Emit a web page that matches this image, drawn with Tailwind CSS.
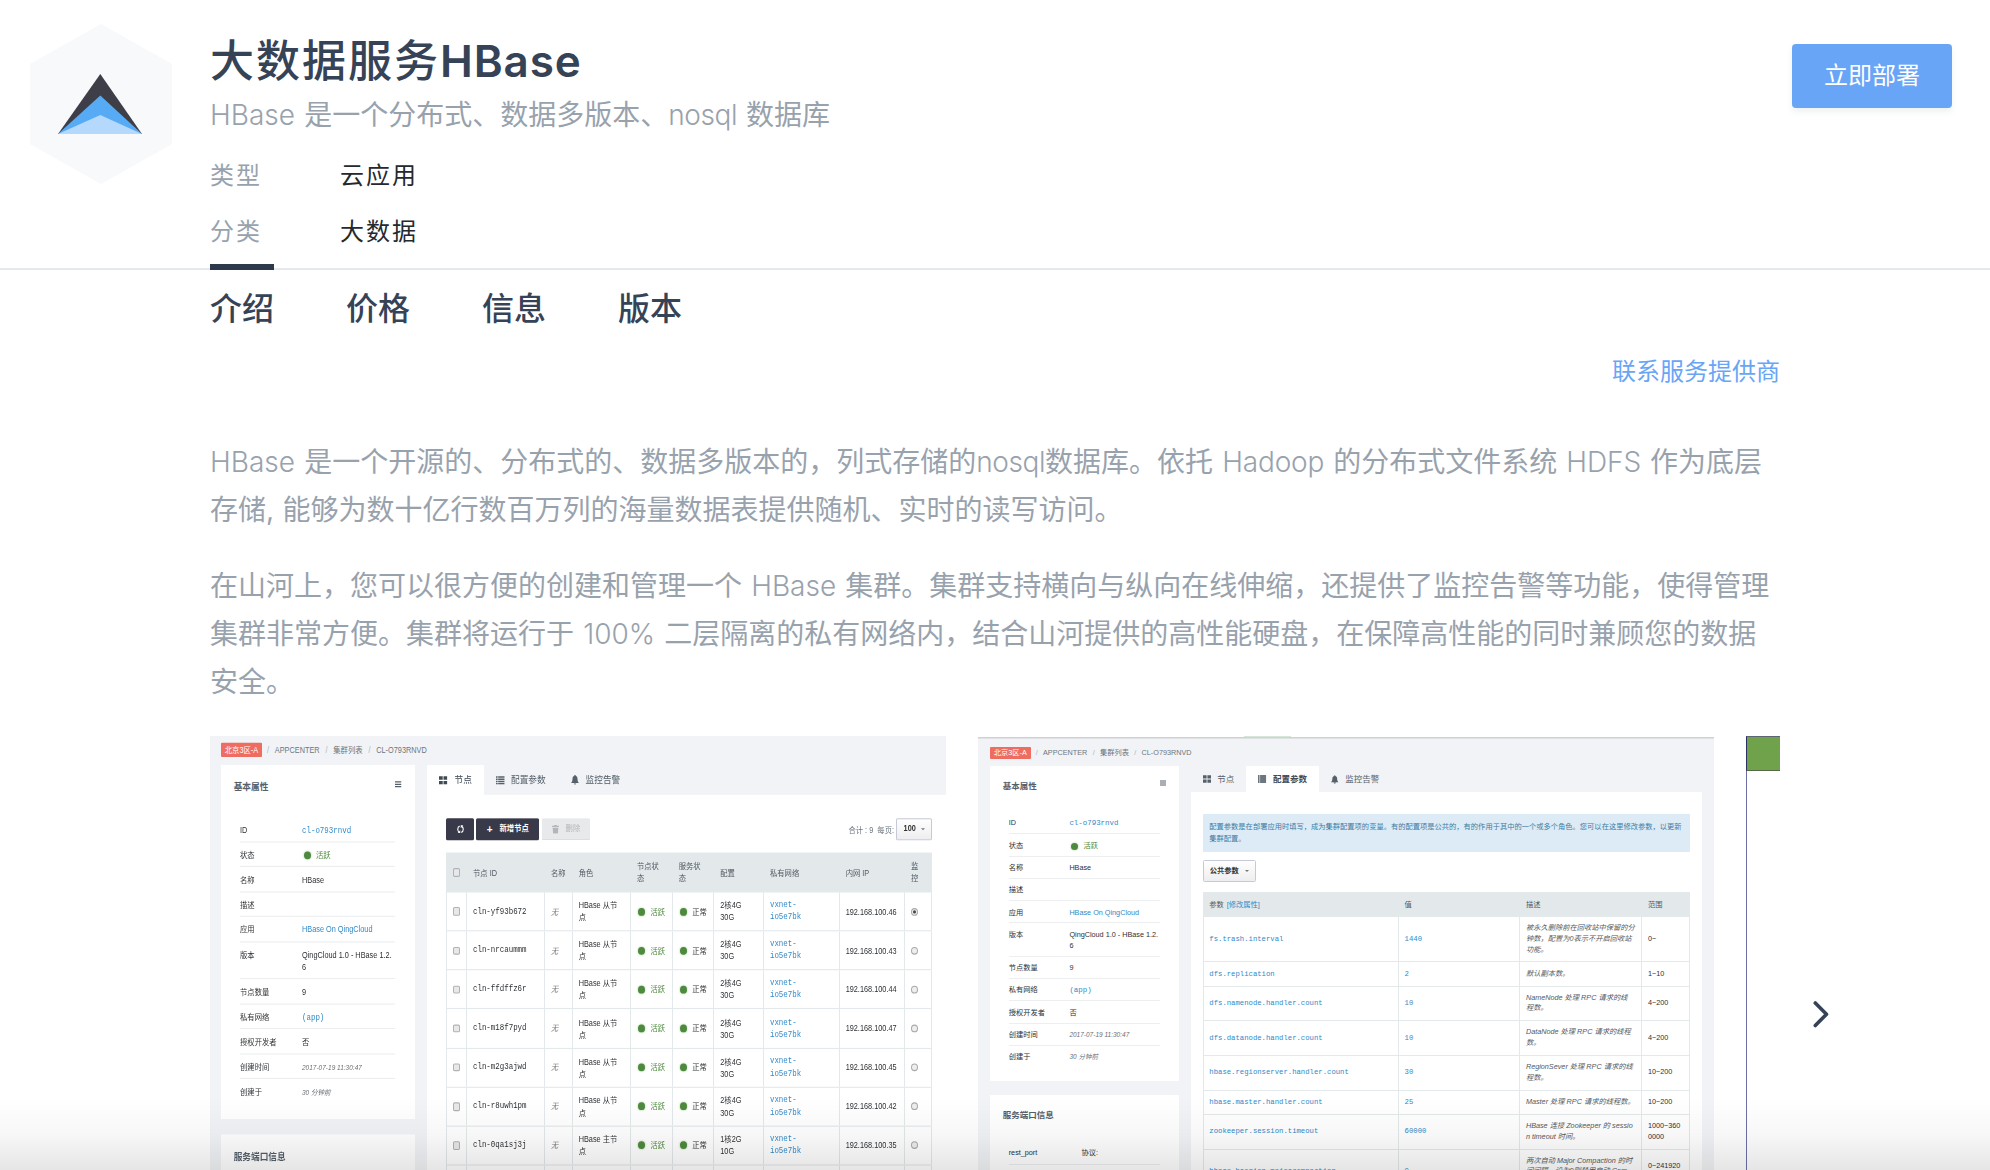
<!DOCTYPE html>
<html lang="zh-CN">
<head>
<meta charset="utf-8">
<title>大数据服务HBase</title>
<script src="https://cdn.jsdelivr.net/npm/@tailwindcss/browser@4"></script>
</head>
<body class="bg-white">
<svg class="hidden" xmlns="http://www.w3.org/2000/svg">
  <symbol id="grid" viewBox="0 0 16 14"><path fill="currentColor" d="M0 0h7v6H0zM8.500 0h7v6h-7zM0 8h7v6H0zM8.500 8h7v6h-7z"/></symbol>
  <symbol id="list" viewBox="0 0 16 14"><path fill="currentColor" d="M0 0h3v2.600H0zM4 0h12v2.600H4zM0 3.800h3v2.600H0zM4 3.800h12v2.600H4zM0 7.600h3v2.600H0zM4 7.600h12v2.600H4zM0 11.400h3V14H0zM4 11.400h12V14H4z"/></symbol>
  <symbol id="bell" viewBox="0 0 14 16"><path fill="currentColor" d="M7 0c.8 0 1.200.6 1.200 1.400C10.500 2 11.500 4 11.500 6.500c0 3.500 1 5 2.500 6.500H0c1.500-1.500 2.500-3 2.500-6.500C2.500 4 3.500 2 5.800 1.400 5.800.6 6.200 0 7 0zM5 13.800h4C9 15 8 16 7 16s-2-1-2-2.200z"/></symbol>
  <symbol id="menu" viewBox="0 0 12 12"><path fill="currentColor" d="M0 1h12v2H0zM0 5h12v2H0zM0 9h12v2H0z"/></symbol>
  <symbol id="sync" viewBox="0 0 16 16"><path fill="none" stroke="currentColor" stroke-width="2.200" d="M6.500 2.500C3.500 3.200 2.500 5.500 2.500 8s1 4.300 3 5.200M9.500 13.500c3-.7 4-3 4-5.500s-1-4.300-3-5.200"/><path fill="currentColor" d="M2.500 15h5v-5zM13.500 1h-5v5z"/></symbol>
  <symbol id="trash" viewBox="0 0 12 14"><path fill="currentColor" d="M4 0h4v1.500h4v2H0v-2h4zM1 4.500h10L10.200 14H1.800z"/></symbol>
</svg>

<div class="relative flex h-[1170px] w-[1990px] flex-col overflow-hidden font-['Inter','Noto_Sans_CJK_SC',sans-serif]">
  <header class="flex h-[270px] shrink-0 border-b-2 border-[#e3e9ef]">
    <div class="w-[210px] pl-[30px] pt-6">
      <svg class="h-[160px] w-[142px]" viewBox="0 0 142 160">
        <path fill="#f7f9fb" d="M71 0l71 40v80l-71 40-71-40V40z"/>
        <path fill="#3e3e49" d="M70.300 50L112 110H28z"/>
        <path fill="#57abf5" d="M70.300 71.500L112 110H28z"/>
        <path fill="#b4d9fc" d="M70.300 91L112 110H28z"/>
      </svg>
    </div>
    <div class="flex flex-1 flex-col pt-[33px]">
      <h1 class="h-14 text-[44px] font-medium leading-[56px] tracking-[2px] text-[#364357]">大数据服务<span class="font-semibold tracking-[0.900px]">HBase</span></h1>
      <p class="mt-[6px] h-10 text-[28px] leading-10 text-[#98a2ad] [word-spacing:1.300px]"><span class="font-light">HBase </span>是一个分布式、数据多版本、<span class="font-light tracking-[-0.400px]">nosql </span>数据库</p>
      <dl class="mt-[21px] grid grid-cols-[130px_1fr] gap-y-4 text-2xl leading-10 tracking-[2px]">
        <dt class="text-[#98a2ad]">类型</dt><dd class="text-[#24292e]">云应用</dd>
        <dt class="text-[#98a2ad]">分类</dt><dd class="text-[#24292e]">大数据</dd>
      </dl>
    </div>
    <div class="pr-[38px] pt-11">
      <button class="block h-16 w-40 rounded bg-[#69a5f7] text-2xl text-white shadow-[0_4px_6px_rgba(50,90,93,0.08)]">立即部署</button>
    </div>
  </header>

  <nav class="relative z-10 -mt-1.5 ml-[210px] flex gap-[72px] text-[32px] font-medium leading-[48px] text-[#364357]">
    <a class="border-t-[6px] border-[#2d394b] pt-[15px]">介绍</a>
    <a class="pt-[21px]">价格</a>
    <a class="pt-[21px]">信息</a>
    <a class="pt-[21px]">版本</a>
  </nav>

  <main class="ml-[210px] w-[1570px]">
    <div class="mt-[19px] text-right text-2xl leading-10 text-[#69a5f7]">联系服务提供商</div>
    <div class="mt-[46px] whitespace-nowrap text-[28px] leading-[48px] text-[#98a2ad] [word-spacing:1.300px]">
      <p><span class="font-light">HBase </span>是一个开源的、分布式的、数据多版本的，列式存储的<span class="font-light tracking-[-0.400px]">nosql</span>数据库。依托<span class="font-light tracking-[-0.150px]"> Hadoop </span>的分布式文件系统<span class="font-light tracking-[-0.100px]"> HDFS </span>作为底层<br><span class="[word-spacing:0.500px]">存储, 能</span>够为数十亿行数百万列的海量数据表提供随机、实时的读写访问。</p>
      <p class="mt-7">在山河上，您可以很方便的创建和管理一个<span class="font-light"> HBase </span>集群。集群支持横向与纵向在线伸缩，还提供了监控告警等功能，使得管理<br>集群非常方便。集群将运行于<span class="font-light"> 100% </span>二层隔离的私有网络内，结合山河提供的高性能硬盘，在保障高性能的同时兼顾您的数据<br>安全。</p>
    </div>

    <section class="mt-[30px] flex h-[434px] gap-8 overflow-hidden font-['Liberation_Sans','Noto_Sans_CJK_SC',sans-serif] text-[#2d3135]">

      <!-- Slide 1: cluster nodes -->
      <div class="h-[391px] w-[736px] shrink-0 origin-top-left scale-y-[1.11] bg-[#f1f3f6] text-[7.33px] leading-[11px]">
        <div class="flex h-[26px] items-start pl-[11px] pt-[6.300px] leading-[13px] text-[#6c7680]">
          <span class="mr-[5px] h-[13px] w-[41px] rounded-[1px] bg-[#ee6c60] text-center text-white">北京3区-A</span>
          <span class="text-[#b0b5ba]">/</span><span class="mx-[5.800px]">APPCENTER</span><span class="text-[#b0b5ba]">/</span><span class="mx-[5.800px]">集群列表</span><span class="text-[#b0b5ba]">/</span><span class="ml-[5.800px]">CL-O793RNVD</span>
        </div>
        <div class="flex pl-[11px]">
          <aside class="w-[193.500px] shrink-0">
            <div class="h-[318.700px] bg-white">
              <div class="flex h-[47.300px] items-start justify-between pl-[12.700px] pr-[13px]">
                <b class="mt-[14.200px] text-[8.670px] leading-[13px] text-[#55606b]">基本属性</b>
                <svg class="mt-[14px] h-[7px] w-[6.500px] text-[#55606b]"><use href="#menu"/></svg>
              </div>
              <div id="info1" class="pl-[19px] pr-[19.400px]"></div>
            </div>
            <div class="mt-[14px] h-24 bg-white pl-[12.700px] pt-[14.500px]"><b class="text-[8.670px] leading-[13px] text-[#55606b]">服务端口信息</b></div>
          </aside>
          <div class="ml-[12.500px] flex-1">
            <div class="flex h-[27px] text-[8.670px] leading-[27px] text-[#55606b]">
              <div class="flex w-[56.700px] items-center bg-white pl-3 text-[#3f4a55]"><svg class="mr-[7px] h-[8px] w-[8.500px]"><use href="#grid"/></svg>节点</div>
              <div class="flex items-center pl-[12.300px]"><svg class="mr-[6.300px] h-[8px] w-[8.700px]"><use href="#list"/></svg>配置参数</div>
              <div class="flex items-center pl-[25px]"><svg class="mr-[7px] h-[9px] w-[8px]"><use href="#bell"/></svg>监控告警</div>
            </div>
            <div class="h-[340px] bg-white pl-[18.700px] pr-[13.600px] pt-[21px]">
              <div class="flex h-[20.400px] items-stretch leading-[20px]">
                <div class="flex w-[28.700px] items-center justify-center rounded-[1.500px] bg-[#383a49] text-white"><svg class="h-[8px] w-[9px]"><use href="#sync"/></svg></div>
                <div class="ml-0.5 flex w-[62.700px] items-center justify-center rounded-[1.500px] bg-[#383a49] font-bold text-white"><span class="mr-[7px] text-[10px]">+</span>新增节点</div>
                <div class="ml-[3px] flex w-[47.700px] items-center justify-center rounded-[1.500px] border-b border-[#d5d7d9] bg-[#e8e9ea] text-[#b3b5b8]"><svg class="mr-[7px] h-[8px] w-[7px]"><use href="#trash"/></svg>删除</div>
                <div class="ml-auto whitespace-pre pr-0.5 pt-px text-[#6c7680]">合计 : 9  每页:</div>
                <div class="flex w-[36.400px] items-center justify-center gap-[5px] rounded-[1.500px] border border-[#c6cad6] bg-gradient-to-b from-white to-[#eeeef0] font-bold text-[#333]">100<span class="h-0 w-0 border-x-2 border-t-[2.500px] border-x-transparent border-t-[#777]"></span></div>
              </div>
              <div id="nodes" class="mt-[11px] border-l border-[#e3e8ea]"></div>
            </div>
          </div>
        </div>
      </div>

      <!-- Slide 2: configuration parameters -->
      <div class="relative h-[434px] w-[736px] shrink-0 bg-[#f1f3f6] text-[7.250px] leading-[10.800px]">
        <div class="flex h-[3px] flex-col border-b border-[#dfe1e4] bg-white"><span class="ml-[266px] h-px w-[47px] bg-[#d5e8d8]"></span><span class="h-px bg-[#cfd1d4]"></span></div>
        <div class="flex h-[26.500px] items-start pl-3 pt-[7.500px] leading-[12.500px] text-[#6c7680]">
          <span class="mr-[5px] h-[12px] w-[40.700px] rounded-[1px] bg-[#ee6c60] text-center text-white">北京3区-A</span>
          <span class="text-[#b0b5ba]">/</span><span class="mx-[5.300px]">APPCENTER</span><span class="text-[#b0b5ba]">/</span><span class="mx-[5.300px]">集群列表</span><span class="text-[#b0b5ba]">/</span><span class="ml-[5.300px]">CL-O793RNVD</span>
        </div>
        <div class="flex pl-3">
          <aside class="w-[189px] shrink-0">
            <div class="h-[315.500px] bg-white">
              <div class="flex h-[46.500px] items-start justify-between pl-[12.700px] pr-[12.700px]">
                <b class="mt-[14.500px] text-[8.500px] leading-[13px] text-[#55606b]">基本属性</b>
                <svg class="mt-[14px] h-[6px] w-[6px] text-[#55606b]"><use href="#menu"/></svg>
              </div>
              <div id="info2" class="pl-[18.700px] pr-[18.700px]"></div>
            </div>
            <div class="mt-[13.700px] h-24 bg-white pl-[12.700px] pt-[14.500px]">
              <b class="block text-[8.500px] leading-[13px] text-[#55606b]">服务端口信息</b>
              <div class="ml-1.5 mr-[18.700px] mt-[20.500px] grid h-[22.300px] grid-cols-[72.700px_1fr] items-center border-b border-[#eceef0]"><span>rest_port</span><span>协议:</span></div>
            </div>
          </aside>
          <div class="ml-[12.300px] w-[510.700px]">
            <div class="flex h-[26.500px] pt-px text-[8.500px] text-[#55606b]">
              <div class="flex w-[55px] items-center pl-[11.700px]"><svg class="mr-[6px] h-[8px] w-[8.300px]"><use href="#grid"/></svg>节点</div>
              <div class="-mt-px flex w-[72.700px] items-center bg-white pl-3 pt-px font-bold text-[#3f4a55]"><svg class="mr-[6.300px] h-[8px] w-[8.300px]"><use href="#list"/></svg>配置参数</div>
              <div class="flex items-center pl-[12.500px]"><svg class="mr-[6.300px] h-[9px] w-[7.500px]"><use href="#bell"/></svg>监控告警</div>
            </div>
            <div class="h-[380px] bg-white px-3 pt-[21.700px]">
              <div class="h-[38px] whitespace-nowrap bg-[#dcebf6] px-1.5 pt-[7.500px] text-[7.280px] leading-[12.300px] text-[#3f7ca3]">配置参数是在部署应用时填写，成为集群配置项的变量。有的配置项是公共的，有的作用于其中的一个或多个角色。您可以在这里修改参数，以更新<br>集群配置。</div>
              <div class="mt-[8.300px] flex h-[22px] w-[53px] items-center justify-between rounded-[1.500px] border border-[#c6cad6] bg-gradient-to-b from-white to-[#eeeef0] pl-[5.500px] pr-1.5 font-bold text-[#333]">公共参数<span class="h-0 w-0 border-x-2 border-t-[2.500px] border-x-transparent border-t-[#777]"></span></div>
              <div id="params" class="mt-[10.300px] border-l border-[#e3e8ea]"></div>
            </div>
          </div>
        </div>
      </div>

      <!-- Slide 3: clipped by the carousel edge -->
      <div class="h-[434px] w-[34px] shrink-0 border-l border-[#6d70a6]">
        <div class="-ml-px h-[35px] border-y border-l border-b-[#55684a] border-l-[#2b2f63] border-t-[#5d6472] bg-[#6fa24b]"></div>
      </div>
    </section>
  </main>

  <button class="absolute left-[1812px] top-[1000px]" aria-label="下一张">
    <svg class="h-7 w-[18px]" viewBox="0 0 18 28" fill="none" stroke="#364357" stroke-width="3.600" stroke-linecap="round" stroke-linejoin="round"><path d="M3.300 3L14.500 14.200 3.300 25.500"/></svg>
  </button>
  <div class="pointer-events-none absolute inset-x-0 bottom-0 h-[72px] bg-gradient-to-b from-black/0 via-black/3 to-black/10"></div>
</div>

<script>
const info = [
  ['ID', `<span class="font-['Liberation_Mono',monospace] text-[7.450px] text-[#3089c9]">cl-o793rnvd</span>`],
  ['状态', `<span class="flex items-center text-[#4e8a3e]"><i class="ml-[2px] mr-[5.500px] h-[7px] w-[6.500px] rounded-full bg-[#4e8a3e] shadow-[0_0_2px_#9cc590]"></i>活跃</span>`],
  ['名称', 'HBase'], ['描述', ''],
  ['应用', `<span class="text-[#3089c9]">HBase On QingCloud</span>`],
  ['版本', 'QingCloud 1.0 - HBase 1.2.<br>6'],
  ['节点数量', '9'],
  ['私有网络', `<span class="font-['Liberation_Mono',monospace] text-[7.450px] text-[#3089c9]">(app)</span>`],
  ['授权开发者', '否'],
  ['创建时间', `<i class="text-[6.500px] text-[#6a7076]">2017-07-19 11:30:47</i>`],
  ['创建于', `<i class="text-[6.500px] text-[#6a7076]">30 分钟前</i>`]
];
function infoRows(id, key, h, tall, pad) {
  document.getElementById(id).innerHTML = info.map(([k, v], i) =>
    `<div class="grid whitespace-nowrap ${i < 10 ? 'border-b border-[#eceef0]' : ''}" style="grid-template-columns:${key}px 1fr;height:${k === '版本' ? tall : h}px;padding-top:${pad}px"><span>${k}</span><span>${v}</span></div>`).join('');
}
infoRows('info1', 62, 22.5, 33.3, 6);
infoRows('info2', 60.7, 22.3, 33.3, 6.4);

const cell = 'flex items-center border-r border-[#e3e8ea] pl-1.5';
const nodeCols = 'grid grid-cols-[20.300px_78px_27.700px_58.300px_41.700px_41.600px_49.700px_75.700px_65.300px_26.700px]';
const box = '<i class="block h-[7.500px] w-[7px] rounded-[1.500px] border border-[#b0b3b6] bg-[#e8e8e8]"></i>';
const dot = '<i class="ml-[1px] mr-[5px] h-[7px] w-[7.500px] rounded-full bg-[#4e8a3e] shadow-[0_0_2px_#9cc590]"></i>';
const nodes = [['cln-yf93b672', 46], ['cln-nrcaummm', 43], ['cln-ffdffz6r', 44], ['cln-m18f7pyd', 47], ['cln-m2g3ajwd', 45], ['cln-r8uwh1pm', 42], ['cln-0qa1sj3j', 35], ['', '']];
document.getElementById('nodes').innerHTML =
  `<div class="${nodeCols} h-[35.700px] bg-[#e3e9eb] text-[#4f5962]">` +
  [box, '节点 ID', '名称', '角色', '节点状<br>态', '服务状<br>态', '配置', '私有网络', '内网 IP', '监<br>控'].map(t => `<div class="flex items-center pl-1.5"><span>${t}</span></div>`).join('') + '</div>' +
  nodes.map(([id, ip], i) => {
    const m = ip === 35;
    const c = id ? [box, `<span class="font-['Liberation_Mono',monospace] text-[7.450px]">${id}</span>`, '<i class="text-[#777]">无</i>',
      `<span>HBase ${m ? '主' : '从'}节<br>点</span>`, dot + '<span class="text-[#4e8a3e]">活跃</span>', dot + '正常',
      m ? '<span>1核2G<br>10G</span>' : '<span>2核4G<br>30G</span>',
      `<span class="font-['Liberation_Mono',monospace] text-[7.450px] text-[#3089c9]">vxnet-<br>io5e7bk</span>`,
      `192.168.100.${ip}`,
      `<i class="flex h-[7px] w-[7px] items-center justify-center rounded-full border border-[#a8abae] bg-[#eee]">${i === 0 ? '<b class="h-[3px] w-[3px] rounded-full bg-[#444]"></b>' : ''}</i>`] : Array(10).fill('');
    return `<div class="${nodeCols} h-[35.130px] whitespace-nowrap border-b border-[#e3e8ea]">` + c.map(t => `<div class="${cell}">${t}</div>`).join('') + '</div>';
  }).join('');

const paramCols = 'grid grid-cols-[194.300px_121.300px_122px_47.700px]';
const params = [
  ['fs.trash.interval', '1440', '被永久删除前在回收站中保留的分<br>钟数，配置为0表示不开启回收站<br>功能。', '0~', 45.3],
  ['dfs.replication', '2', '默认副本数。', '1~10', 24.3],
  ['dfs.namenode.handler.count', '10', 'NameNode 处理 RPC 请求的线<br>程数。', '4~200', 34.7],
  ['dfs.datanode.handler.count', '10', 'DataNode 处理 RPC 请求的线程<br>数。', '4~200', 34.7],
  ['hbase.regionserver.handler.count', '30', 'RegionSever 处理 RPC 请求的线<br>程数。', '10~200', 34.7],
  ['hbase.master.handler.count', '25', 'Master 处理 RPC 请求的线程数。', '10~200', 24],
  ['zookeeper.session.timeout', '60000', 'HBase 连接 Zookeeper 的 sessio<br>n timeout 时间。', '1000~360<br>0000', 35],
  ['hbase.hregion.majorcompaction', '0', '两次自动 Major Compaction 的时<br>间间隔，设为0则禁用自动 Com<br>paction。', '0~241920<br>0000', 45.3]
];
document.getElementById('params').innerHTML =
  `<div class="${paramCols} h-[24.700px] bg-[#e3e9eb] pt-px text-[#4f5962]"><div class="flex items-center pl-[5px]">参数&nbsp;<span class="ml-px text-[#3089c9]">[修改属性]</span></div><div class="flex items-center pl-1.5">值</div><div class="flex items-center pl-1.5">描述</div><div class="flex items-center pl-1.5">范围</div></div>` +
  params.map(([k, v, d, r, h]) => `<div class="${paramCols} whitespace-nowrap border-b border-[#e3e8ea]" style="height:${h}px">
    <div class="flex items-center border-r border-[#e3e8ea] pl-[5px] font-['Liberation_Mono',monospace] text-[7.280px] text-[#3089c9]">${k}</div>
    <div class="flex items-center border-r border-[#e3e8ea] pl-1.5 font-['Liberation_Mono',monospace] text-[7.280px] text-[#3089c9]">${v}</div>
    <div class="flex items-center border-r border-[#e3e8ea] pl-1.5 italic text-[#54595e]"><span>${d}</span></div>
    <div class="flex items-center border-r border-[#e3e8ea] pl-1.5"><span>${r}</span></div></div>`).join('');
</script>
</body>
</html>
